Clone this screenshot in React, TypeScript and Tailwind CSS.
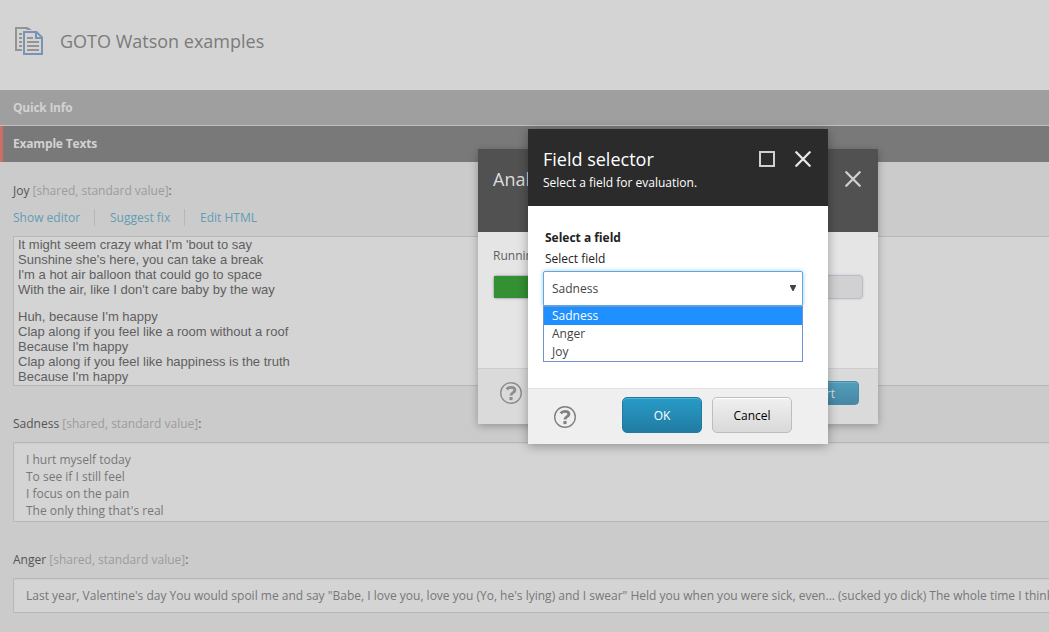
import type { ReactNode } from "react";

function PagesIcon() {
  return (
    <svg width="30" height="30" viewBox="0 0 30 30" fill="none" className="shrink-0">
      <path d="M1 1h12.500l4.500 3h-5l-1-1H3v20h5v2H1z" fill="#949494" />
      <path d="M5 7h3v2H5zM5 11h3v2H5zM5 15h3v2H5zM5 19h3v2H5z" fill="#949494" />
      <path d="M10 6h12.500l5.500 5.500V28H10z" stroke="#7893b3" strokeWidth="2" />
      <path d="M22 6v6h6" stroke="#7893b3" strokeWidth="2" />
      <path d="M13 11h6v2h-6zM13 15h12v2H13zM13 19h12v2H13zM13 23h12v2H13z" fill="#949494" />
    </svg>
  );
}

function CloseIcon({ color }: { color: string }) {
  return (
    <svg width="16" height="16" viewBox="0 0 16 16" fill="none" stroke={color} strokeWidth="2.3" strokeLinecap="round" className="shrink-0">
      <path d="M1.300 1.300L14.700 14.700M14.700 1.300L1.300 14.700" />
    </svg>
  );
}

function HelpIcon({ color }: { color: string }) {
  return (
    <svg width="22" height="22" viewBox="0 0 22 22" fill="none" stroke={color} className="shrink-0">
      <circle cx="11" cy="11" r="10.300" strokeWidth="1.400" />
      <path d="M6.800 7.400C7.800 5.900 9.300 5.400 11 5.400c2.400 0 3.900 1.100 3.900 2.800 0 2.600-3.900 2.300-3.900 5.300" strokeWidth="2.900" />
      <path d="M11 15v3.100" strokeWidth="3.100" />
    </svg>
  );
}

function Label({ name }: { name: string }) {
  return (
    <div className="h-[18px] px-[13px] leading-[18px] text-[#555]">
      {name} <span className="text-[#9c9c9c]">[shared, standard value]</span>:
    </div>
  );
}

function Section({ children, active }: { children: ReactNode; active?: boolean }) {
  return (
    <div className={active ? "flex h-9 shrink-0 items-center border-l-[3px] border-[#cc6d66] bg-[#797979] pl-[10px] font-bold tracking-[-0.18px] text-[#d2d2d2]" : "flex h-9 shrink-0 items-center border-b border-[#c0c0c0] bg-[#9f9f9f] pl-[13px] font-bold tracking-[-0.24px] text-[#d2d2d2]"}>
      {children}
    </div>
  );
}

export default function App() {
  return (
    <div className="relative flex h-[632px] w-[1049px] flex-col overflow-hidden bg-[#cbcbcb] font-['Open_Sans',sans-serif] text-[12px]">
      <header className="flex h-[90px] shrink-0 items-center bg-[#d4d4d4] pb-[8px] pl-[14px]">
        <PagesIcon />
        <h1 className="ml-4 text-[18px] text-[#7b7b7b]">GOTO Watson examples</h1>
      </header>
      <Section>Quick Info</Section>
      <Section active>Example Texts</Section>

      <div className="flex flex-col pt-5">
        <Label name="Joy" />
        <div className="mt-[9px] flex h-[17px] items-center pl-[13px] text-[#629db5]">
          <span className="w-[82px] border-r border-[#b7b7b7] leading-[17px]">Show editor</span>
          <span className="w-[90px] border-r border-[#b7b7b7] pl-[15px] leading-[17px]">Suggest fix</span>
          <span className="pl-[15px] leading-[17px]">Edit HTML</span>
        </div>
        <div className="mt-[10px] ml-[13px] h-[150px] border border-r-0 border-[#b7b7b7] bg-[#d4d4d4] pl-1 font-['Liberation_Sans',Arial,sans-serif] text-[13px] leading-[15px] text-[#5f5f5f]">
          <p>It might seem crazy what I'm 'bout to say<br />Sunshine she's here, you can take a break<br />I'm a hot air balloon that could go to space<br />With the air, like I don't care baby by the way</p>
          <p className="mt-3">Huh, because I'm happy<br />Clap along if you feel like a room without a roof<br />Because I'm happy<br />Clap along if you feel like happiness is the truth<br />Because I'm happy</p>
        </div>
        <div className="mt-[29px]"><Label name="Sadness" /></div>
        <div className="mt-[9px] ml-[13px] h-[80px] rounded-l-[2px] border border-r-0 border-[#b7b7b7] bg-[#d4d4d4] pt-[8px] pl-3 leading-[17px] text-[#777] shadow-[inset_0_1px_1px_#cbcbcb]">
          I hurt myself today<br />To see if I still feel<br />I focus on the pain<br />The only thing that's real
        </div>
        <div className="mt-[29px]"><Label name="Anger" /></div>
        <div className="mt-[9px] ml-[13px] h-[35px] overflow-hidden rounded-l-[2px] border border-r-0 border-[#b7b7b7] bg-[#d4d4d4] pl-3 leading-[34px] whitespace-nowrap text-[#777] shadow-[inset_0_1px_1px_#cbcbcb]">
          Last year, Valentine's day You would spoil me and say "Babe, I love you, love you (Yo, he's lying) and I swear" Held you when you were sick, even... (sucked yo dick) The whole time I think
        </div>
      </div>

      <div className="absolute top-[149px] left-[478px] flex h-[275px] w-[400px] flex-col bg-[#e5e5e5] shadow-[0_2px_8px_rgba(0,0,0,0.28)]">
        <div className="flex h-[83px] shrink-0 justify-between bg-[#515151] pt-[18px] pr-[17px] pl-[15px]">
          <span className="text-[18px] leading-6 text-[#dedede]">Anal</span>
          <div className="pt-1"><CloseIcon color="#d0d0d0" /></div>
        </div>
        <div className="flex flex-1 flex-col px-[15px] pt-[15px] text-[#606060]">
          <span className="leading-[18px]">Running</span>
          <div className="mt-[10px] flex h-6 rounded-[4px] border border-[#bcbacb] bg-[#d1d1d1] shadow-[0_0_3px_rgba(0,0,0,0.12)]">
            <div className="w-20 bg-[#339033]" />
          </div>
        </div>
        <div className="flex h-[56px] shrink-0 items-center justify-between border-t border-[#cdcdcd] bg-[#dadada] pr-[19px] pb-[8px] pl-[22px]">
          <HelpIcon color="#8d8d8d" />
          <div className="flex h-6 w-[80px] items-center justify-end rounded-[4px] border border-[#478ba8] bg-linear-to-b from-[#509fbd] to-[#4788a3] pt-[2px] pr-[23px] text-[#dedede] shadow-[inset_0_1px_0_#6badc6]">Start</div>
        </div>
      </div>

      <div className="absolute top-[129px] left-[528px] flex h-[315px] w-[300px] flex-col bg-white shadow-[0_2px_10px_rgba(0,0,0,0.32)]">
        <div className="flex h-[77px] shrink-0 justify-between bg-[#2b2b2b] pt-[18px] pr-[17px] pl-[15px] text-white">
          <div>
            <div className="text-[18px] leading-6">Field selector</div>
            <div className="mt-[3px] leading-[18px]">Select a field for evaluation.</div>
          </div>
          <div className="flex gap-5 pt-1">
            <div className="h-4 w-4 border-2 border-[#d0d0d0]" />
            <CloseIcon color="#e8e8e8" />
          </div>
        </div>
        <div className="flex flex-1 flex-col px-[15px] pt-[23px] text-[#222]">
          <div className="pl-[2px] leading-[18px] font-bold">Select a field</div>
          <div className="mt-[3px] pl-[2px] leading-[18px]">Select field</div>
          <div className="mt-[3px] flex h-[35px] w-[260px] items-center justify-between rounded-t-[2px] border border-[#5ca9e4] pr-[6px] pl-2 text-[#444] shadow-[0_0_4px_rgba(92,169,228,0.6)]">
            Sadness
            <svg width="6" height="6" viewBox="0 0 6 6" fill="#444" className="mb-[2px]"><path d="M0 0h6v1L3.500 6h-1L0 1z" /></svg>
          </div>
          <div className="relative flex h-[56px] w-[260px] flex-col border border-[#7192d0] bg-white leading-[18px] text-[#444]">
            <div className="h-[18px] bg-[#1e90ff] pl-2 text-white">Sadness</div>
            <div className="h-[18px] pl-2">Anger</div>
            <div className="h-[18px] pl-2">Joy</div>
          </div>
        </div>
        <div className="flex h-[56px] shrink-0 items-center border-t border-[#e0e0e0] bg-[#efefef] pr-9 pb-[4px] pl-[26px]">
          <div className="pt-[4px]"><HelpIcon color="#808080" /></div>
          <div className="ml-auto flex h-9 w-20 items-center justify-center rounded-[5px] border border-[#217ba1] bg-linear-to-b from-[#289bc8] to-[#217ca3] pt-[2px] text-white shadow-[inset_0_1px_0_#55b0d4]">OK</div>
          <div className="ml-[10px] flex h-9 w-20 items-center justify-center rounded-[5px] border border-[#bdbdbd] bg-linear-to-b from-[#f0f0f0] to-[#d9d9d9] pt-[2px] text-black shadow-[inset_0_1px_0_#fff]">Cancel</div>
        </div>
      </div>
    </div>
  );
}
